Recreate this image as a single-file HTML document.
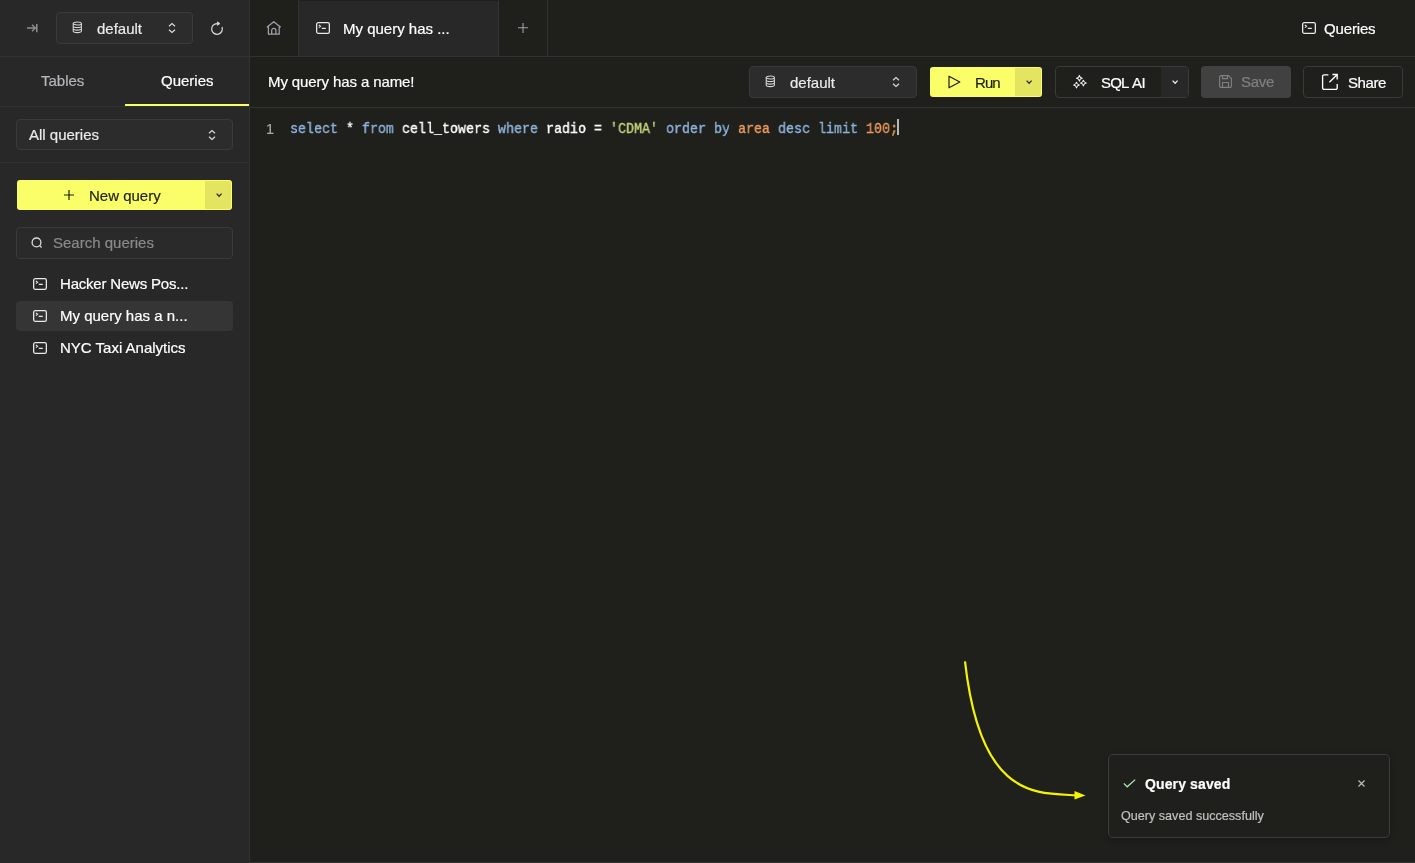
<!DOCTYPE html>
<html><head><meta charset="utf-8">
<style>
*{box-sizing:border-box;margin:0;padding:0}
html,body{width:1415px;height:863px;overflow:hidden;background:#1f1f1c;font-family:"Liberation Sans",sans-serif;color:#fff}
.abs{position:absolute}
svg{position:absolute;overflow:visible}
.t{position:absolute;white-space:nowrap;line-height:1;-webkit-text-stroke:0.2px currentColor;will-change:transform}
</style></head><body>

<!-- SIDEBAR -->
<div class="abs" style="left:0;top:0;width:249px;height:863px;background:#282828"></div>
<div class="abs" style="left:249px;top:0;width:1px;height:863px;background:#323232"></div>
<!-- sidebar header border -->
<div class="abs" style="left:0;top:56px;width:249px;height:1px;background:#323232"></div>

<!-- collapse icon -->
<svg style="left:27px;top:24px" width="11" height="9" viewBox="0 0 11 9"><path d="M0 4H8.2M5 0.7L8.4 4L5 7.3" stroke="#8e8e8e" stroke-width="1.4" fill="none"/><path d="M9.8 0V8.2" stroke="#a0a0a0" stroke-width="1.3" fill="none"/></svg>

<!-- db select -->
<div class="abs" style="left:56px;top:12px;width:137px;height:32px;border:1px solid #3a3a3a;border-radius:4px;background:#2c2c2c"></div>
<svg style="left:72px;top:21px" width="11" height="12" viewBox="0 0 11 12"><g stroke="#d8d8d8" stroke-width="1.05" fill="none"><ellipse cx="5.3" cy="2.5" rx="4.1" ry="1.5"/><path d="M1.2 2.5V10.1C1.2 11 3 11.6 5.3 11.6S9.4 11 9.4 10.1V2.5M1.2 5C1.2 5.9 3 6.5 5.3 6.5S9.4 5.9 9.4 5M1.2 7.6C1.2 8.5 3 9.1 5.3 9.1S9.4 8.5 9.4 7.6"/></g></svg>
<div class="t" style="left:97px;top:21px;font-size:15px;color:#eaeaea">default</div>
<svg style="left:168px;top:23px" width="8" height="11" viewBox="0 0 8 11"><path d="M1 3.3L4 0.5L7 3.3M1 6.7L4 9.5L7 6.7" stroke="#dadada" stroke-width="1.2" fill="none"/></svg>

<!-- refresh -->
<svg style="left:209px;top:20px" width="16" height="16" viewBox="0 0 16 16"><path d="M12.96 6.95A5.35 5.35 0 1 1 8 3.5999999999999996" stroke="#d8d8d8" stroke-width="1.25" fill="none"/><path d="M8.4 1.9L10.9 3.6L8.4 5.3Z" fill="#d8d8d8" stroke="#d8d8d8" stroke-width="0.9" stroke-linejoin="round"/></svg>

<!-- sidebar tabs -->
<div class="t" style="left:41px;top:73px;font-size:15px;color:#b3b6bd">Tables</div>
<div class="t" style="left:161px;top:73px;font-size:15px;color:#fff">Queries</div>
<div class="abs" style="left:0;top:106px;width:249px;height:1px;background:#323232"></div>
<div class="abs" style="left:125px;top:104px;width:124px;height:2px;background:#faff69"></div>

<!-- All queries select -->
<div class="abs" style="left:16px;top:119px;width:217px;height:31px;border:1px solid #3a3a3a;border-radius:4px;background:#2c2c2c"></div>
<div class="t" style="left:29px;top:127px;font-size:15px;color:#eaeaea">All queries</div>
<svg style="left:208px;top:130px" width="8" height="11" viewBox="0 0 8 11"><path d="M1 3.3L4 0.5L7 3.3M1 6.7L4 9.5L7 6.7" stroke="#dadada" stroke-width="1.2" fill="none"/></svg>
<div class="abs" style="left:0;top:162px;width:249px;height:1px;background:#323232"></div>

<!-- New query button -->
<div class="abs" style="left:17px;top:180px;width:215px;height:30px;border-radius:3px;background:#faff69;overflow:hidden"><div class="abs" style="left:188px;top:1px;width:26px;height:28px;border-radius:0 2px 2px 0;background:#e3e561"></div></div>
<svg style="left:64px;top:190px" width="10" height="10" viewBox="0 0 10 10"><path d="M5 0V10M0 5H10" stroke="#1f1f1c" stroke-width="1.2"/></svg>
<div class="t" style="left:89px;top:188px;font-size:15px;color:#1f1f1c">New query</div>
<svg style="left:216px;top:193px" width="7" height="5" viewBox="0 0 7 5"><path d="M0.6 0.6L3.1 3.2L5.6 0.6" stroke="#2a2a1e" stroke-width="1.3" fill="none"/></svg>

<!-- search -->
<div class="abs" style="left:16px;top:227px;width:217px;height:32px;border:1px solid #3a3a3a;border-radius:4px;background:#2a2a2a"></div>
<svg style="left:31px;top:237px" width="12" height="12" viewBox="0 0 12 12"><circle cx="5.5" cy="5.4" r="4.4" stroke="#dcdcdc" stroke-width="1.3" fill="none"/><path d="M8.7 8.6L10.6 10.5" stroke="#dcdcdc" stroke-width="1.3"/></svg>
<div class="t" style="left:53px;top:235px;font-size:15px;color:#8a8a8a">Search queries</div>

<!-- query list -->
<div class="abs" style="left:16px;top:301px;width:217px;height:30px;border-radius:4px;background:#353535"></div>
<svg style="left:33px;top:278px" width="14" height="12" viewBox="0 0 14 12"><rect x="0.65" y="0.65" width="12.7" height="10.7" rx="1.6" stroke="#e8e8e8" stroke-width="1.3" fill="none"/><path d="M2.9 3L4.5 4.3L2.9 5.6M5.8 6.4H9.8" stroke="#e8e8e8" stroke-width="1.15" fill="none"/></svg>
<div class="t" style="left:60px;top:276px;font-size:15px;letter-spacing:-0.2px">Hacker News Pos...</div>
<svg style="left:33px;top:310px" width="14" height="12" viewBox="0 0 14 12"><rect x="0.65" y="0.65" width="12.7" height="10.7" rx="1.6" stroke="#e8e8e8" stroke-width="1.3" fill="none"/><path d="M2.9 3L4.5 4.3L2.9 5.6M5.8 6.4H9.8" stroke="#e8e8e8" stroke-width="1.15" fill="none"/></svg>
<div class="t" style="left:60px;top:308px;font-size:15px">My query has a n...</div>
<svg style="left:33px;top:342px" width="14" height="12" viewBox="0 0 14 12"><rect x="0.65" y="0.65" width="12.7" height="10.7" rx="1.6" stroke="#e8e8e8" stroke-width="1.3" fill="none"/><path d="M2.9 3L4.5 4.3L2.9 5.6M5.8 6.4H9.8" stroke="#e8e8e8" stroke-width="1.15" fill="none"/></svg>
<div class="t" style="left:60px;top:340px;font-size:15px">NYC Taxi Analytics</div>

<!-- MAIN TOP BAR -->
<div class="abs" style="left:250px;top:56px;width:1165px;height:1px;background:#323232"></div>
<div class="abs" style="left:298px;top:0;width:1px;height:56px;background:#323232"></div>
<div class="abs" style="left:299px;top:1px;width:199px;height:55px;background:#282828"></div>
<div class="abs" style="left:498px;top:0;width:1px;height:56px;background:#323232"></div>
<div class="abs" style="left:547px;top:0;width:1px;height:56px;background:#323232"></div>
<!-- home -->
<svg style="left:266px;top:21px" width="16" height="14" viewBox="0 0 16 14"><path d="M0.9 6.3L7.8 0.7L14.7 6.3M2.4 5.1V13.2H13.2V5.1M5.7 13.2V9.4A2.1 2.1 0 0 1 9.9 9.4V13.2" stroke="#a0a3aa" stroke-width="1.25" fill="none" stroke-linejoin="round"/></svg>
<!-- terminal icon in tab -->
<svg style="left:316px;top:22px" width="14" height="12" viewBox="0 0 14 12"><rect x="0.65" y="0.65" width="12.7" height="10.7" rx="1.6" stroke="#e8e8e8" stroke-width="1.3" fill="none"/><path d="M2.9 3L4.5 4.3L2.9 5.6M5.8 6.4H9.8" stroke="#e8e8e8" stroke-width="1.15" fill="none"/></svg>
<div class="t" style="left:343px;top:21px;font-size:15px">My query has ...</div>
<!-- plus -->
<svg style="left:518px;top:23px" width="10" height="10" viewBox="0 0 10 10"><path d="M5 0V10M0 4.8H10" stroke="#a0a0a0" stroke-width="1.1"/></svg>
<!-- right Queries -->
<svg style="left:1302px;top:22px" width="14" height="12" viewBox="0 0 14 12"><rect x="0.65" y="0.65" width="12.7" height="10.7" rx="1.6" stroke="#e8e8e8" stroke-width="1.3" fill="none"/><path d="M2.9 3L4.5 4.3L2.9 5.6M5.8 6.4H9.8" stroke="#e8e8e8" stroke-width="1.15" fill="none"/></svg>
<div class="t" style="left:1324px;top:21px;font-size:15px;letter-spacing:-0.15px">Queries</div>

<!-- QUERY HEADER -->
<div class="t" style="left:268px;top:74px;font-size:15px;letter-spacing:-0.1px">My query has a name!</div>
<div class="abs" style="left:250px;top:107px;width:1165px;height:1px;background:#323232"></div>

<!-- db select main -->
<div class="abs" style="left:749px;top:66px;width:168px;height:32px;border:1px solid #3a3a3a;border-radius:4px;background:#2c2c2c"></div>
<svg style="left:765px;top:75px" width="11" height="12" viewBox="0 0 11 12"><g stroke="#d8d8d8" stroke-width="1.05" fill="none"><ellipse cx="5.3" cy="2.5" rx="4.1" ry="1.5"/><path d="M1.2 2.5V10.1C1.2 11 3 11.6 5.3 11.6S9.4 11 9.4 10.1V2.5M1.2 5C1.2 5.9 3 6.5 5.3 6.5S9.4 5.9 9.4 5M1.2 7.6C1.2 8.5 3 9.1 5.3 9.1S9.4 8.5 9.4 7.6"/></g></svg>
<div class="t" style="left:790px;top:75px;font-size:15px;color:#eaeaea">default</div>
<svg style="left:892px;top:76px" width="8" height="12" viewBox="0 0 8 12"><path d="M1 4.3L4 1.5L7 4.3M1 7.7L4 10.5L7 7.7" stroke="#dadada" stroke-width="1.2" fill="none"/></svg>

<!-- Run -->
<div class="abs" style="left:930px;top:67px;width:112px;height:30px;border-radius:3px;background:#faff69;overflow:hidden"><div class="abs" style="left:85px;top:1px;width:26px;height:28px;border-radius:0 2px 2px 0;background:#e3e561"></div></div>
<svg style="left:948px;top:75px" width="13" height="14" viewBox="0 0 13 14"><path d="M1 1.2V12.8L11.8 7Z" stroke="#1f1f1c" stroke-width="1.2" fill="none" stroke-linejoin="round"/></svg>
<div class="t" style="left:975px;top:75px;font-size:15px;letter-spacing:-0.9px;color:#1f1f1c">Run</div>
<svg style="left:1026px;top:80px" width="7" height="5" viewBox="0 0 7 5"><path d="M0.6 0.6L3.1 3.2L5.6 0.6" stroke="#2a2a1e" stroke-width="1.3" fill="none"/></svg>

<!-- SQL AI -->
<div class="abs" style="left:1055px;top:66px;width:134px;height:32px;border:1px solid #3a3a3a;border-radius:4px;background:#1f1f1c;overflow:hidden"><div class="abs" style="left:105px;top:0;width:28px;height:30px;background:#282828"></div></div>
<svg style="left:1074px;top:75px" width="13" height="14" viewBox="0 0 13 14"><path d="M5.4 0.3999999999999999Q5.83 2.86 8.3 3.3Q5.83 3.73 5.4 6.199999999999999Q4.97 3.73 2.5000000000000004 3.3Q4.97 2.86 5.4 0.3999999999999999ZM9.4 5.199999999999999Q9.84 7.67 12.3 8.1Q9.84 8.54 9.4 11.0Q8.96 8.54 6.5 8.1Q8.96 7.67 9.4 5.199999999999999ZM2.5 7.199999999999999Q2.94 9.66 5.4 10.1Q2.94 10.54 2.5 13.0Q2.06 10.54 -0.3999999999999999 10.1Q2.06 9.66 2.5 7.199999999999999Z" stroke="#f0f0f0" stroke-width="1.05" fill="none" stroke-linejoin="round"/></svg>
<div class="t" style="left:1101px;top:75px;font-size:15px;letter-spacing:-0.8px">SQL</div><div class="t" style="left:1132px;top:75px;font-size:15px;letter-spacing:-0.6px">AI</div>
<svg style="left:1172px;top:80px" width="7" height="5" viewBox="0 0 7 5"><path d="M0.6 0.6L3.1 3.2L5.6 0.6" stroke="#ececec" stroke-width="1.3" fill="none"/></svg>

<!-- Save -->
<div class="abs" style="left:1201px;top:66px;width:90px;height:32px;border-radius:4px;background:#414141"></div>
<svg style="left:1219px;top:75px" width="13" height="13" viewBox="0 0 13 13"><path d="M1.5 0.6H9.5L12.4 3.5V11A1.4 1.4 0 0 1 11 12.4H2A1.4 1.4 0 0 1 0.6 11V2A1.4 1.4 0 0 1 2 0.6ZM3.5 0.6V3.6H8.5V0.6M3.5 12.4V7.5H9.5V12.4" stroke="#808080" stroke-width="1.1" fill="none"/></svg>
<div class="t" style="left:1241px;top:74px;font-size:15px;letter-spacing:-0.3px;color:#808080">Save</div>

<!-- Share -->
<div class="abs" style="left:1303px;top:66px;width:100px;height:32px;border:1px solid #3a3a3a;border-radius:4px"></div>
<svg style="left:1321px;top:73px" width="18" height="18" viewBox="0 0 18 18"><path d="M7.4 1.8H3.1A1.5 1.5 0 0 0 1.6 3.3V14.9A1.5 1.5 0 0 0 3.1 16.4H14.7A1.5 1.5 0 0 0 16.2 14.9V11M11.4 1.5H16.2V6.6M16 1.7L8.4 9.3" stroke="#fff" stroke-width="1.35" fill="none"/></svg>
<div class="t" style="left:1348px;top:75px;font-size:15px;letter-spacing:-0.4px">Share</div>

<!-- EDITOR -->
<div class="t" style="left:266px;top:122px;font-size:14.5px;color:#a8a8a8">1</div>
<div class="abs" style="left:290px;top:117px;font-family:'Liberation Mono',monospace;font-size:15.5px;line-height:24px;white-space:pre;color:#fff;transform:scaleX(0.86);transform-origin:0 0;-webkit-text-stroke:0.4px currentColor;will-change:transform"><span style="color:#8fb4dc">select</span> * <span style="color:#8fb4dc">from</span> cell_towers <span style="color:#8fb4dc">where</span> radio = <span style="color:#c5d37a">'CDMA'</span> <span style="color:#8fb4dc">order by</span> <span style="color:#eb9a5c">area</span> <span style="color:#8fb4dc">desc limit</span> <span style="color:#eb9a5c">100;</span></div>
<div class="abs" style="left:897px;top:119px;width:2px;height:16px;background:#b8b8b8"></div>

<!-- bottom border -->
<div class="abs" style="left:250px;top:862px;width:1165px;height:1px;background:#323232"></div>

<!-- arrow -->
<svg style="left:0;top:0" width="1415" height="863"><path d="M965 661.3C980.3 798.2 1035.3 793.1 1076 795.3" stroke="#f5f500" stroke-width="2.2" fill="none"/><path d="M1074.5 790.9L1085.5 795.6L1074.5 799.6Z" fill="#f5f500"/></svg>

<!-- toast -->
<div class="abs" style="left:1108px;top:754px;width:282px;height:84px;border:1px solid #3c3c3c;border-radius:5px;background:#1f1f1c;box-shadow:0 2px 6px rgba(0,0,0,0.25)"></div>
<svg style="left:1123px;top:779px" width="13" height="9" viewBox="0 0 13 9"><path d="M0.8 4.4L4.2 7.8L12.2 0.6" stroke="#a9ecb4" stroke-width="1.25" fill="none"/></svg>
<div class="t" style="left:1145px;top:777px;font-size:14px;font-weight:bold;letter-spacing:0.12px">Query saved</div>
<svg style="left:1358px;top:780px" width="7" height="7" viewBox="0 0 7 7"><path d="M0.5 0.5L6.5 6.5M6.5 0.5L0.5 6.5" stroke="#c0c0c0" stroke-width="1.1"/></svg>
<div class="t" style="left:1121px;top:810px;font-size:12.6px;color:#c0c0c0">Query saved successfully</div>

</body></html>
